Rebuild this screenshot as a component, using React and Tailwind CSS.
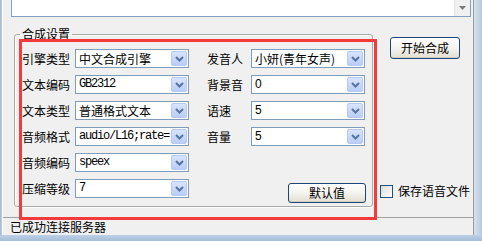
import React from 'react';

const cjk = "font-['Noto_Sans_CJK_SC','Noto_Sans',sans-serif]";

const Chevron = () => (
  <svg width="9" height="6" viewBox="0 0 9 6">
    <path d="M1 1 L4.5 4.5 L8 1" fill="none" stroke="#56739f" strokeWidth="2" />
  </svg>
);

const Combo = ({ value, mono, sans }) => {
  let fontCls = cjk + " text-[12px]";
  if (mono) fontCls = "font-['Liberation_Mono',monospace] text-[12px] tracking-[-1.2px]";
  if (sans) fontCls = "font-['Liberation_Sans',sans-serif] text-[12px]";
  return (
    <div className="w-[114px] h-[19px] flex items-center bg-white border border-[#7f9db9]">
      <span className={`flex-1 pl-[3px] leading-[17px] whitespace-nowrap overflow-hidden text-black ${fontCls}`}>{value}</span>
      <div className="w-[16px] h-[15px] mr-[1px] flex items-center justify-center rounded-[2px] border border-[#b6c9f3] bg-gradient-to-b from-[#d8e4fd] to-[#b9cdf8]">
        <Chevron />
      </div>
    </div>
  );
};

const Label = ({ children, w }) => (
  <span className={`${w} ${cjk} text-[12px] leading-[19px] text-black whitespace-nowrap`}>{children}</span>
);

const Button = ({ children, w, h }) => (
  <button className={`${w} ${h} ${cjk} text-[12px] text-black rounded-[3px] border border-[#1c4677] bg-gradient-to-b from-white via-[#f4f3ee] to-[#e2dfd2] shadow-[inset_0_-1px_0_#d6d0c0]`}>
    {children}
  </button>
);

const rows = [
  ['引擎类型', { value: '中文合成引擎' }, '发音人', { value: '小妍(青年女声)' }],
  ['文本编码', { value: 'GB2312', mono: true }, '背景音', { value: '0', sans: true }],
  ['文本类型', { value: '普通格式文本' }, '语速', { value: '5', sans: true }],
  ['音频格式', { value: 'audio/L16;rate=', mono: true }, '音量', { value: '5', sans: true }],
  ['音频编码', { value: 'speex', mono: true }, null, null],
  ['压缩等级', { value: '7', mono: true }, null, null],
];

export default function App() {
  return (
    <div className="relative w-[482px] h-[241px] bg-[#f0f0f0] flex flex-col overflow-hidden">
      <div className="flex-1 flex">
        <div className="w-[3px] bg-gradient-to-r from-[#9fb4cc] to-[#c4d4e6] border-r border-white" />
        <div className="flex-1 flex flex-col">
          {/* text area (scrolled) */}
          <div className="ml-[8px] mr-[2px] h-[17px] flex bg-white border border-t-0 border-[#82a0bd]">
            <div className="flex-1" />
            <div className="w-[16px] bg-[#f0f0f0] border-l border-[#e3e3e3] flex items-start justify-center pt-[6px]">
              <svg width="7" height="4" viewBox="0 0 7 4"><path d="M0 0 H7 L3.5 4 Z" fill="#7a7a7a" /></svg>
            </div>
          </div>

          <div className="flex mt-[9px]">
            <fieldset className="ml-[11px] w-[359px] pl-[7px] pr-[6px] pt-[7px] pb-[8px] border border-[#a9a9a9] rounded-[3px] shadow-[inset_1px_1px_0_#fff,1px_1px_0_#fff]">
              <legend className={`-ml-[2px] px-[2px] ${cjk} text-[12px] leading-[16px] text-black`}>合成设置</legend>
              <div className="flex flex-col gap-[7px]">
                {rows.map((r, i) => (
                  <div key={i} className="flex h-[19px] items-start">
                    <Label w="w-[53px]">{r[0]}</Label>
                    <Combo {...r[1]} />
                    {r[2] && (
                      <>
                        <span className="w-[18px]" />
                        <Label w="w-[44px]">{r[2]}</Label>
                        <Combo {...r[3]} />
                      </>
                    )}
                    {i === 5 && (
                      <div className="ml-[99px] mt-[1px]">
                        <Button w="w-[78px]" h="h-[20px]">默认值</Button>
                      </div>
                    )}
                  </div>
                ))}
              </div>
            </fieldset>

            <div className="flex flex-col items-start">
              <div className="ml-[17px] mt-[9px]">
                <Button w="w-[70px]" h="h-[22px]">开始合成</Button>
              </div>
              <label className="mt-auto mb-[9px] ml-[7px] flex items-center gap-[5px]">
                <span className="w-[13px] h-[13px] border border-[#1c5180] bg-gradient-to-br from-[#dcdcd7] to-white" />
                <span className={`${cjk} text-[12px] leading-[14px] text-black whitespace-nowrap`}>保存语音文件</span>
              </label>
            </div>
          </div>

          {/* status bar */}
          <div className="mt-auto h-[18px] border-t border-[#a0a0a0] flex items-center pl-[7px]">
            <span className={`${cjk} text-[12px] leading-[16px] text-black`}>已成功连接服务器</span>
          </div>
        </div>
        <div className="w-[9px] border-l border-[#9a9a9a] bg-gradient-to-r from-[#d5e1ee] to-[#b7cade]" />
      </div>
      <div className="h-[6px] bg-gradient-to-b from-[#bcd0e6] to-[#a6bdd7]" />

      {/* red annotation box */}
      <div className="absolute left-[19px] top-[39px] w-[358px] h-[181px] border-[3px] border-[#f43b3b] pointer-events-none" />
    </div>
  );
}
